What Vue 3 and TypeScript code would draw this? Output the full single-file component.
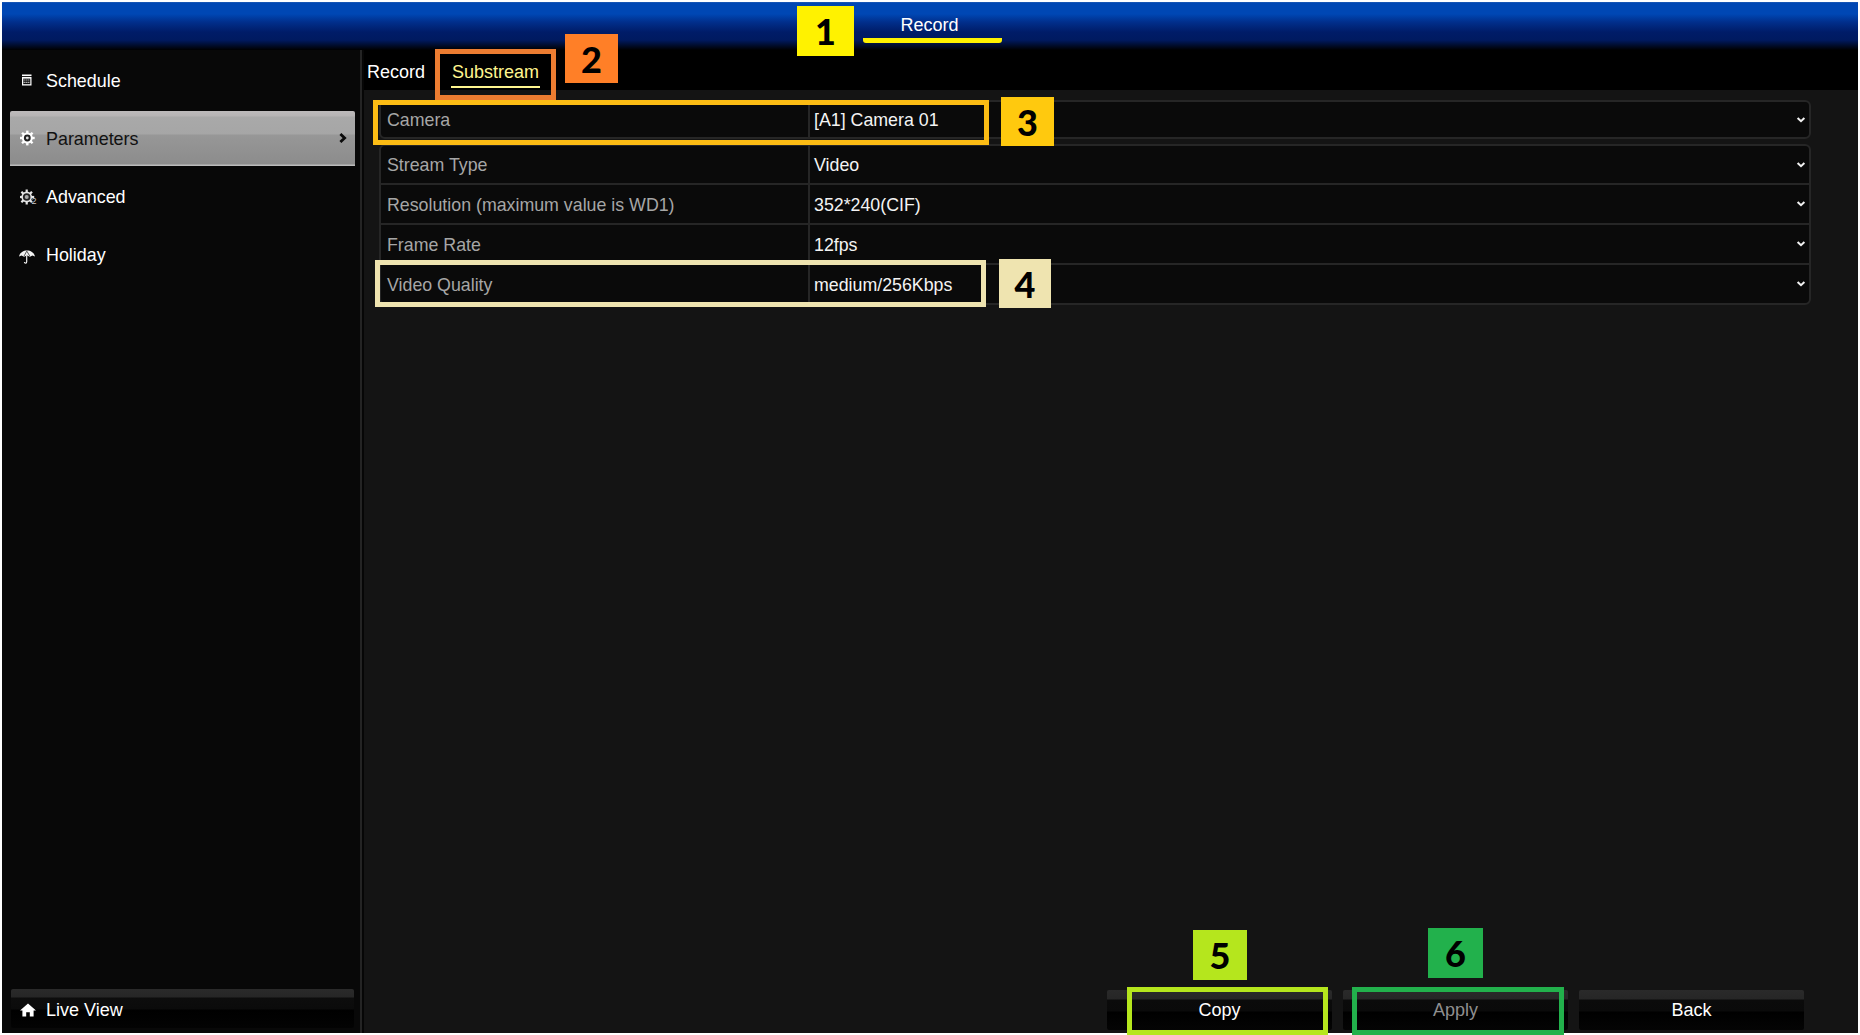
<script setup lang="ts">
interface Row { label: string; value: string }
const firstRow: Row = { label: 'Camera', value: '[A1] Camera 01' }
const rows: Row[] = [
  { label: 'Stream Type', value: 'Video' },
  { label: 'Resolution (maximum value is WD1)', value: '352*240(CIF)' },
  { label: 'Frame Rate', value: '12fps' },
  { label: 'Video Quality', value: 'medium/256Kbps' },
]
const buttons = [
  { label: 'Copy', dim: false },
  { label: 'Apply', dim: true },
  { label: 'Back', dim: false },
]
const gearTeeth = [0, 45, 90, 135, 180, 225, 270, 315]
</script>

<template>
  <div class="page">
    <div class="frame">
      <header class="topbar">
        <div class="top-tab">Record</div>
      </header>
      <div class="main">
        <aside class="sidebar">
          <nav class="nav">
            <div class="nav-item">
              <span class="nav-icon i-sched">
                <svg width="14" height="14" viewBox="0 0 14 14">
                  <rect x="2" y="1.5" width="9.5" height="1.6" fill="#fff" />
                  <rect x="2" y="4" width="9.5" height="8.5" fill="#fff" />
                  <rect x="3.2" y="5.6" width="7.1" height="5.6" fill="#111" />
                  <path d="M3.6 7h6.3M3.6 9.4h6.3" stroke="#e8e8e8" stroke-width="1.1" stroke-dasharray="1.1 .9" />
                </svg>
              </span>
              Schedule
            </div>
            <div class="nav-item active">
              <span class="nav-icon i-gear">
                <svg width="16" height="16" viewBox="0 0 16 16">
                  <g fill="#fff">
                    <rect v-for="a in gearTeeth" :key="a" x="6.1" y="0.6" width="2.4" height="3.4" :transform="`rotate(${a} 7.3 8)`" />
                  </g>
                  <circle cx="7.3" cy="8" r="5.5" fill="#fff" />
                  <circle cx="7.3" cy="8" r="3.4" fill="#222" />
                  <circle cx="7.3" cy="8" r="1.4" fill="#ddd" />
                </svg>
              </span>
              Parameters
              <svg class="nav-arrow" width="8" height="10" viewBox="0 0 8 10">
                <path d="M1.4 1 L5.6 5 L1.4 9" fill="none" stroke="#0a0a0a" stroke-width="2.8" />
              </svg>
            </div>
            <div class="nav-item">
              <span class="nav-icon i-adv">
                <svg width="18" height="16" viewBox="0 0 18 16">
                  <g fill="#e6e6e6">
                    <rect v-for="a in gearTeeth" :key="a" x="5.6" y="0.5" width="2.2" height="3.4" :transform="`rotate(${a} 6.7 8)`" />
                  </g>
                  <circle cx="6.7" cy="8" r="5.4" fill="#e6e6e6" />
                  <circle cx="6.7" cy="8" r="3.8" fill="#222" />
                  <circle cx="6.7" cy="8" r="2" fill="#aaa" />
                  <text x="11.4" y="15" font-size="9" fill="#ccc" font-family="Liberation Sans, sans-serif">2</text>
                </svg>
              </span>
              Advanced
            </div>
            <div class="nav-item">
              <span class="nav-icon i-umb">
                <svg width="16" height="14" viewBox="0 0 16 14">
                  <path d="M0 6.6 C0.8 2.6 4.2 0.5 8 0.5 C11.8 0.5 15.2 2.6 16 6.6 L13.4 5.6 L11 6.8 L8 5.6 L5 6.8 L2.6 5.6 Z" fill="#f2f2f2" />
                  <path d="M7.7 1.2 L5 6.2 M7.9 1.2 L10.8 6.2" stroke="#333" stroke-width=".8" fill="none" />
                  <path d="M7.7 5.6 V11.8 C7.7 13.6 5.6 13.6 5.4 12" fill="none" stroke="#f2f2f2" stroke-width="1.2" />
                </svg>
              </span>
              Holiday
            </div>
          </nav>
          <button class="live-view" type="button">
            <svg width="16" height="14" viewBox="0 0 16 14">
              <path d="M8 0.5 L16 7.5 H13.6 V13.5 H9.8 V9.2 H6.2 V13.5 H2.4 V7.5 H0 Z" fill="#fff" />
            </svg>
            Live View
          </button>
        </aside>
        <section class="content">
          <div class="tabs">
            <span class="tab">Record</span>
            <span class="tab current">Substream</span>
          </div>
          <div class="form">
            <div class="group">
              <div class="row">
                <div class="cell-label">{{ firstRow.label }}</div>
                <div class="cell-value">{{ firstRow.value }}</div>
                <svg class="chev" width="10" height="8" viewBox="0 0 10 8">
                  <path d="M1.6 2 L5 5.2 L8.4 2" fill="none" stroke="#f2f2f2" stroke-width="2" />
                </svg>
              </div>
            </div>
            <div class="group">
              <div v-for="r in rows" :key="r.label" class="row">
                <div class="cell-label">{{ r.label }}</div>
                <div class="cell-value">{{ r.value }}</div>
                <svg class="chev" width="10" height="8" viewBox="0 0 10 8">
                  <path d="M1.6 2 L5 5.2 L8.4 2" fill="none" stroke="#f2f2f2" stroke-width="2" />
                </svg>
              </div>
            </div>
          </div>
          <div class="actions">
            <button v-for="b in buttons" :key="b.label" type="button" class="btn" :class="{ dim: b.dim }">{{ b.label }}</button>
          </div>
        </section>
      </div>
    </div>

    <!-- Numbered annotations drawn over the screenshot -->
    <div class="badge b1">1</div>
    <div class="badge b2">2</div>
    <div class="badge b3">3</div>
    <div class="badge b4">4</div>
    <div class="badge b5">5</div>
    <div class="badge b6">6</div>
    <div class="mark m2"></div>
    <div class="mark m3"></div>
    <div class="mark m4"></div>
    <div class="mark m5"></div>
    <div class="mark m6"></div>
  </div>
</template>

<style>
html, body { margin: 0; background: #fff; }
</style>

<style scoped>
* { box-sizing: border-box; }
.page {
  position: relative;
  width: 1860px;
  height: 1035px;
  overflow: hidden;
  background: #fff;
  padding: 2px 2px 2px;
  font-family: "Liberation Sans", Arial, sans-serif;
  font-size: 18px;
  color: #fff;
}
.frame { display: flex; flex-direction: column; height: 100%; background: #000; }

.topbar {
  height: 48px;
  flex: none;
  display: flex;
  justify-content: center;
  background: linear-gradient(to bottom, #2b62b5 0, #0047b4 1px, #0047b4 12px, #012f8c 20px, #001c68 30px, #001a60 38px, #000 48px);
}
.top-tab {
  width: 139px;
  height: 41px;
  padding: 13px 5px 0 0;
  line-height: 20px;
  text-align: center;
  margin-left: 4px;
  border-bottom: 5px solid #fff200;
  border-radius: 0 0 3px 3px;
}
.main { flex: 1; display: flex; min-height: 0; }

.sidebar {
  width: 360px;
  flex: none;
  display: flex;
  flex-direction: column;
  padding: 3px 5px 5px 8px;
  background: #080808;
  border-right: 2px solid #242424;
}
.nav { display: flex; flex-direction: column; gap: 3px; font-size: 17.9px; }
.nav-item {
  height: 55px;
  display: flex;
  align-items: center;
  position: relative;
  padding: 2px 0 0 10px;
  color: #fff;
}
.nav-item.active {
  color: #111;
  background: linear-gradient(to bottom, #bdbabb 0, #b6b4b4 5px, #a9a9a9 6px, #a6a6a6 23px, #979797 24px, #8c8c8c 53px, #bbb 54px);
  border-radius: 2px 2px 0 0;
}
.nav-icon { width: 26px; display: flex; align-items: center; }
.i-sched { margin-top: -4px; }
.i-gear { margin-top: -3px; }
.i-adv { margin-top: -1px; }
.i-umb { margin: 2px 0 0 -1px; width: 27px; }
.nav-arrow { position: absolute; right: 8px; top: 22px; }

.live-view {
  margin: auto 1px 0 1px;
  height: 39px;
  display: flex;
  align-items: center;
  gap: 10px;
  padding: 3px 0 0 9px;
  border: 0;
  border-radius: 2px;
  color: #fff;
  font: inherit;
  background: linear-gradient(to bottom, #2a2a2a 0, #262626 8px, #0d0d0d 9px, #0b0b0b 20px, #000 21px, #030303 100%);
}

.content {
  flex: 1;
  display: flex;
  flex-direction: column;
  min-width: 0;
  background: #141414;
  border-left: 2px solid #060606;
}
.tabs {
  height: 40px;
  flex: none;
  background: #000;
  display: flex;
  align-items: flex-start;
  gap: 26px;
  padding-left: 3px;
}
.tab { height: 39px; line-height: 20px; padding-top: 12px; color: #fff; }
.tab.current {
  color: #fff68f;
  width: 89px;
  height: 38px;
  padding-left: 1px;
  border-bottom: 2px solid #fff68f;
}
.form {
  display: flex;
  flex-direction: column;
  gap: 5px;
  margin: 10px 47px 0 15px;
  font-size: 17.8px;
}
.group {
  border: 2px solid #262626;
  border-radius: 6px;
  background: #0a0a0a;
}
.row {
  height: 40px;
  display: flex;
  align-items: center;
  position: relative;
  border-top: 2px solid #262626;
}
.group .row:first-child { height: 37px; border-top: 0; }
.group:first-child .row { height: 35px; }
.cell-label {
  width: 429px;
  flex: none;
  height: 100%;
  display: flex;
  align-items: center;
  padding: 2px 0 0 6px;
  color: #a6a6a6;
  border-right: 2px solid #262626;
}
.cell-value { padding: 2px 0 0 4px; color: #f4f4f4; }
.chev { position: absolute; right: 3px; top: 50%; margin-top: -4px; }

.actions {
  margin-top: auto;
  display: flex;
  justify-content: flex-end;
  gap: 11px;
  padding: 0 54px 3px 0;
}
.btn {
  width: 225px;
  height: 40px;
  padding: 0;
  border: 0;
  border-radius: 2px;
  font: inherit;
  color: #fff;
  background: linear-gradient(to bottom, #2a2a2a 0, #262626 9px, #0b0b0b 10px, #0a0a0a 21px, #000 22px, #040404 100%);
}
.btn.dim { color: #8f8f8f; }

.badge {
  position: absolute;
  display: flex;
  align-items: center;
  justify-content: center;
  font-family: "Lato", "Open Sans", sans-serif;
  font-weight: 900;
  font-size: 36px;
  color: #000;
}
.b1 { left: 797px; top: 6px; width: 57px; height: 50px; background: #fff200; }
.b2 { left: 565px; top: 34px; width: 53px; height: 49px; background: #ff7f27; }
.b3 { left: 1001px; top: 97px; width: 53px; height: 49px; background: #ffc90e; }
.b4 { left: 999px; top: 259px; width: 52px; height: 49px; background: #efe4b0; }
.b5 { left: 1193px; top: 930px; width: 54px; height: 50px; background: #b5e61d; }
.b6 { left: 1428px; top: 928px; width: 55px; height: 50px; background: #22b14c; }

.mark { position: absolute; border: 5px solid; pointer-events: none; }
.m2 { left: 435px; top: 49px; width: 121px; height: 51px; border-color: #ed7d31; }
.m3 { left: 373px; top: 100px; width: 616px; height: 45px; border-color: #fcbc14; }
.m4 { left: 375px; top: 260px; width: 611px; height: 47px; border-color: #efe4b0; }
.m5 { left: 1127px; top: 987px; width: 201px; height: 48px; border-color: #b5e61d; }
.m6 { left: 1352px; top: 987px; width: 212px; height: 48px; border-color: #22b14c; }
</style>
